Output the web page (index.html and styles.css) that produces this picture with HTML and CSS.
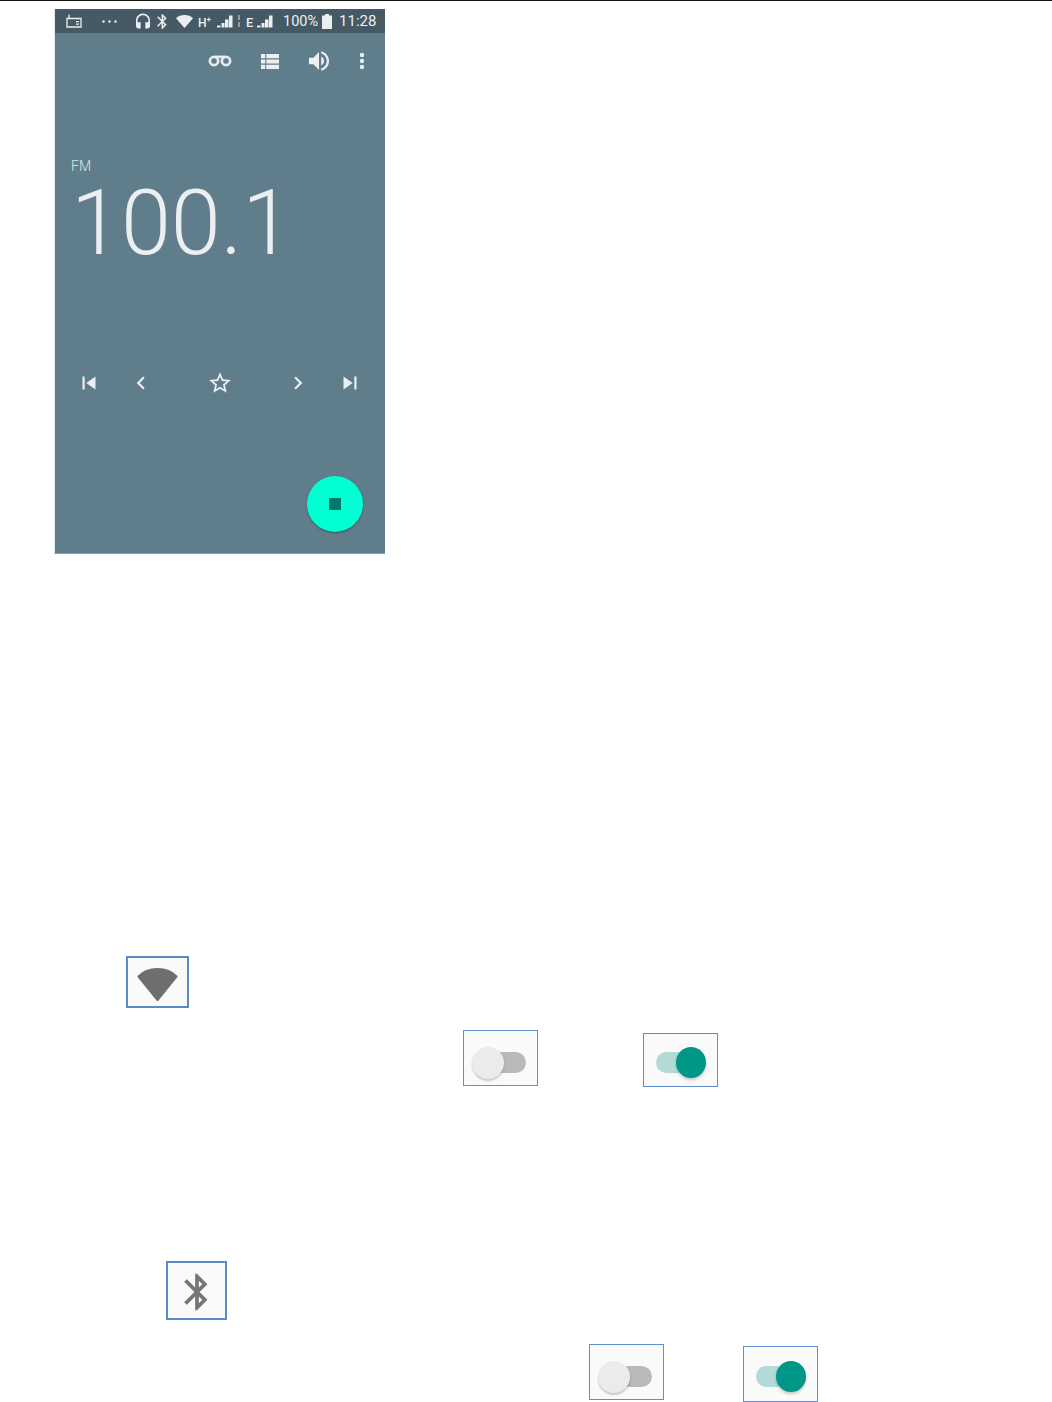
FILE: index.html
```html
<!DOCTYPE html>
<html lang="en">
<head>
    <meta charset="UTF-8">
    <meta name="viewport" content="width=device-width, initial-scale=1.0">
    <title>FM Radio</title>
    <link rel="stylesheet" href="styles.css">
</head>
<body>
    <div class="top-rule"></div>

    <div class="phone">
        <div class="status-bar">
            <svg class="st-radio" viewBox="0 0 16 14"><path d="M1 4.500h14v8.500H1z" fill="none" stroke="currentColor" stroke-width="1.300"/><path d="M3 4.500L3 .5" stroke="currentColor" stroke-width="1.300"/><path d="M10 7h3v1.200h-3zM10 9.600h3v1.200h-3z" fill="currentColor"/></svg>
            <svg class="st-dots" viewBox="0 0 15 3"><circle cx="1.500" cy="1.500" r="1.200" fill="currentColor"/><circle cx="7.500" cy="1.500" r="1.200" fill="currentColor"/><circle cx="13.500" cy="1.500" r="1.200" fill="currentColor"/></svg>
            <svg class="st-headset" viewBox="3 1 18 19"><path fill="currentColor" d="M12 1c-4.970 0-9 4.030-9 9v7c0 1.660 1.340 3 3 3h3v-8H5v-2c0-3.870 3.130-7 7-7s7 3.130 7 7v2h-4v8h3c1.660 0 3-1.340 3-3v-7c0-4.970-4.030-9-9-9z"/></svg>
            <svg class="st-bt" viewBox="5 2 13 20"><path fill="currentColor" d="M17.710 7.710L12 2h-1v7.590L6.410 5 5 6.410 10.590 12 5 17.590 6.410 19 11 14.410V22h1l5.710-5.710-4.300-4.290 4.300-4.290zM13 5.830l1.880 1.880L13 9.590V5.830zm1.880 10.460L13 18.170v-3.760l1.880 1.880z"/></svg>
            <svg class="st-wifi" viewBox="0 0 17 13"><path fill="currentColor" d="M0 3.200C2.200 1.200 5.200 0 8.500 0s6.300 1.200 8.500 3.200L8.500 13z"/></svg>
            <span class="st-hplus">H<sup>+</sup></span>
            <svg class="st-signal" viewBox="0 0 16 13"><path fill="currentColor" d="M0 10.500h3.500v2H0zM4.500 8h3v4.500h-3zM8 4.500h3.500v8H8zM12 .5h3.500v12H12z"/></svg>
            <svg class="st-arrows" viewBox="0 0 2 12"><path fill="currentColor" opacity=".45" d="M0 0h2v5H0zM0 7h2v5H0z"/></svg>
            <span class="st-e">E</span>
            <svg class="st-signal st-signal-two" viewBox="0 0 16 13"><path fill="currentColor" d="M0 10.500h3.500v2H0zM4.500 8h3v4.500h-3zM8 4.500h3.500v8H8zM12 .5h3.500v12H12z"/></svg>
            <span class="st-pct">100%</span>
            <svg class="st-battery" viewBox="0 0 10 15"><path fill="currentColor" d="M3 0h4v1.500h3V15H0V1.500h3z"/></svg>
            <span class="st-time">11:28</span>
        </div>

        <div class="toolbar">
            <svg class="tb-voicemail" viewBox="-1 5 26 13"><path fill="currentColor" stroke="currentColor" stroke-width=".8" d="M18.500 6C15.460 6 13 8.460 13 11.500c0 1.330.47 2.550 1.260 3.500H9.740c.79-.95 1.260-2.170 1.260-3.500C11 8.460 8.540 6 5.500 6S0 8.460 0 11.500 2.460 17 5.500 17h13c3.040 0 5.500-2.460 5.500-5.500S21.540 6 18.500 6zm-13 9C3.570 15 2 13.430 2 11.500S3.570 8 5.500 8 9 9.570 9 11.500 7.430 15 5.500 15zm13 0c-1.930 0-3.500-1.570-3.500-3.500S16.570 8 18.500 8 22 9.570 22 11.500 20.430 15 18.500 15z"/></svg>
            <svg class="tb-list" viewBox="4 5 17 14"><path fill="currentColor" d="M4 14h4v-4H4v4zm0 5h4v-4H4v4zM4 9h4V5H4v4zm5 5h12v-4H9v4zm0 5h12v-4H9v4zM9 5v4h12V5H9z"/></svg>
            <svg class="tb-volume" viewBox="3 3 18 18"><path fill="currentColor" d="M3 9v6h4l5 5V4L7 9H3zm13.500 3c0-1.770-1.020-3.290-2.500-4.030v8.050c1.480-.73 2.500-2.250 2.500-4.020zM14 3.230v2.060c2.890.86 5 3.540 5 6.710s-2.110 5.850-5 6.710v2.060c4.010-.91 7-4.490 7-8.770s-2.990-7.860-7-8.770z"/></svg>
            <svg class="tb-more" viewBox="0 0 6 18"><circle cx="3" cy="3" r="2.200" fill="currentColor"/><circle cx="3" cy="9" r="2.200" fill="currentColor"/><circle cx="3" cy="15" r="2.200" fill="currentColor"/></svg>
        </div>

        <div class="band">FM</div>
        <div class="freq">100.1</div>

        <div class="transport">
            <div class="transport-group">
                <svg class="tr-icon" viewBox="0 0 24 24"><path fill="currentColor" d="M6 6h2v12H6zm3.500 6l8.500 6V6z"/></svg>
                <svg class="tr-icon" viewBox="0 0 24 24"><path fill="currentColor" d="M15.410 7.410L14 6l-6 6 6 6 1.410-1.410L10.830 12z"/></svg>
            </div>
            <svg class="tr-icon" viewBox="0 0 24 24"><path fill="currentColor" d="M22 9.240l-7.190-.62L12 2 9.190 8.630 2 9.240l5.460 4.730L5.820 21 12 17.270 18.180 21l-1.630-7.030L22 9.240zM12 15.400l-3.760 2.270 1-4.280-3.320-2.880 4.380-.38L12 6.100l1.710 4.040 4.380.38-3.320 2.880 1 4.280L12 15.400z"/></svg>
            <div class="transport-group">
                <svg class="tr-icon" viewBox="0 0 24 24"><path fill="currentColor" d="M10 6L8.590 7.410 13.170 12l-4.580 4.590L10 18l6-6z"/></svg>
                <svg class="tr-icon" viewBox="0 0 24 24"><path fill="currentColor" d="M6 18l8.500-6L6 6v12zM16 6v12h2V6h-2z"/></svg>
            </div>
        </div>

        <div class="fab-row">
            <div class="fab"><div class="fab-stop"></div></div>
        </div>
    </div>

    <div class="icon-box wifi-box">
        <svg class="wifi-glyph" viewBox="0 0 41 33"><path d="M1.500 8.500C6 3.500 12.500 1 20.500 1s14.500 2.500 19 7.500L20.500 32z"/></svg>
    </div>

    <div class="toggle-row wifi-toggles">
        <div class="toggle-box">
            <div class="thumb thumb-off"></div>
            <div class="track track-off"></div>
        </div>
        <div class="toggle-box toggle-box-on wifi-on">
            <div class="track track-on"></div>
            <div class="thumb thumb-on"></div>
        </div>
    </div>

    <div class="icon-box bt-box">
        <svg class="bt-glyph" viewBox="0 0 24 24"><path d="M17.710 7.710L12 2h-1v7.590L6.410 5 5 6.410 10.590 12 5 17.590 6.410 19 11 14.410V22h1l5.710-5.710-4.300-4.290 4.300-4.290zM13 5.830l1.880 1.880L13 9.590V5.830zm1.880 10.460L13 18.170v-3.760l1.880 1.880z"/></svg>
    </div>

    <div class="toggle-row bt-toggles">
        <div class="toggle-box">
            <div class="thumb thumb-off"></div>
            <div class="track track-off"></div>
        </div>
        <div class="toggle-box toggle-box-on bt-on">
            <div class="track track-on"></div>
            <div class="thumb thumb-on"></div>
        </div>
    </div>
</body>
</html>
```

FILE: styles.css
```css
body {
    margin: 0;
    background-color: white;
    font-family: Roboto, "Liberation Sans", sans-serif;
    overflow: hidden;
}

.top-rule {
    height: 1px;
    background-color: #111;
}

/* radio screenshot */
.phone {
    width: 330px;
    height: 544px;
    margin: 8px 0 0 54px;
    border-left: 1px solid #e4eaf2;
    border-bottom: 1px solid #7f9cc2;
    background-color: #607d8b;
    color: #eceff1;
}

.status-bar {
    display: flex;
    align-items: center;
    height: 24px;
    padding-left: 11px;
    background-color: #455a64;
}

.status-bar svg {
    display: block;
    flex: none;
}

.st-radio { width: 16px; height: 14px; }
.st-dots { width: 15px; height: 3px; margin-left: 20px; }
.st-headset { width: 14px; height: 16px; margin-left: 19px; }
.st-bt { width: 10px; height: 15px; margin-left: 7px; }
.st-wifi { width: 17px; height: 13px; margin-left: 9px; }
.st-signal { width: 16px; height: 13px; margin-left: 4px; }
.st-signal-two { margin-left: 3px; }
.st-arrows { width: 2px; height: 12px; margin-left: 5px; }
.st-battery { width: 10px; height: 15px; margin-left: 4px; }

.st-hplus {
    width: 15px;
    margin: 3px 0 0 5px;
    font-size: 12px;
    font-weight: 500;
}

.st-hplus sup {
    font-size: 8px;
    line-height: 0;
}

.st-e {
    width: 8px;
    margin: 3px 0 0 6px;
    font-size: 13px;
    font-weight: 500;
}

.st-pct {
    margin-left: 10px;
    font-size: 14.5px;
}

.st-time {
    margin-left: 7px;
    font-size: 15px;
}

.toolbar {
    display: flex;
    justify-content: flex-end;
    align-items: center;
    gap: 30px;
    height: 56px;
    padding-right: 20px;
}

.toolbar svg { display: block; }

.tb-voicemail {
    width: 24px;
    height: 12px;
    margin: 0 -1px;
    transform: scaleY(-1);
}

.tb-list { width: 18px; height: 15px; }
.tb-volume { width: 20px; height: 20px; }
.tb-more { width: 6px; height: 18px; }

.band {
    margin: 69px 0 0 16px;
    font-size: 14px;
    font-weight: 300;
    line-height: 16px;
    color: #dfe5e8;
}

.freq {
    margin: 5px 0 0 16px;
    font-size: 90px;
    font-weight: 300;
    line-height: 90px;
}

.transport {
    display: flex;
    justify-content: space-between;
    align-items: center;
    height: 36px;
    margin-top: 95.5px;
    padding: 0 17px 0 16px;
}

.transport-group {
    display: flex;
    gap: 16px;
}

.tr-icon {
    display: block;
    width: 36px;
    height: 26px;
}

.fab-row {
    display: flex;
    justify-content: flex-end;
    margin-top: 75.5px;
    padding-right: 22px;
}

.fab {
    display: flex;
    justify-content: center;
    align-items: center;
    width: 56px;
    height: 56px;
    border-radius: 50%;
    background-color: #00ffd2;
    box-shadow: 0 1px 2px rgba(0, 0, 0, 0.35);
}

.fab-stop {
    width: 12px;
    height: 12px;
    background-color: #00796b;
}

/* cropped icons below the screenshot */
.icon-box {
    display: flex;
    justify-content: center;
    align-items: center;
    box-sizing: border-box;
    border: 2px solid #5b8ac6;
    background-color: #fafafa;
}

.wifi-box {
    width: 63px;
    height: 52px;
    margin: 402px 0 0 126px;
    padding-top: 4px;
}

.wifi-glyph {
    width: 41px;
    height: 33px;
    fill: #6e6e6e;
    stroke: #6e6e6e;
    stroke-width: 2;
    stroke-linejoin: round;
    filter: blur(0.6px);
}

.bt-box {
    width: 61px;
    height: 59px;
    margin: 174px 0 0 166px;
    padding-top: 3px;
}

.bt-glyph {
    width: 44px;
    height: 44px;
    fill: #757575;
    filter: blur(0.6px);
}

.toggle-row {
    display: flex;
    align-items: flex-start;
}

.wifi-toggles {
    gap: 105px;
    margin-top: 22px;
    padding-left: 463px;
}

.bt-toggles {
    gap: 79px;
    margin-top: 24px;
    padding-left: 589px;
}

.toggle-box {
    display: flex;
    align-items: center;
    box-sizing: border-box;
    width: 75px;
    height: 56px;
    padding: 9px 0 0 8px;
    border: 1px solid #5f8fd0;
    background-color: #fafafa;
}

.toggle-box-on {
    padding: 5px 0 0 12px;
}

.wifi-on { margin-top: 3px; height: 54px; }
.bt-on { margin-top: 2px; }

.thumb {
    position: relative;
    flex: none;
    width: 32px;
    height: 32px;
    border-radius: 50%;
}

.thumb-off {
    background-color: #ebebeb;
    box-shadow: 0 2px 2px rgba(0, 0, 0, 0.2);
}

.thumb-on {
    width: 30px;
    height: 31px;
    margin-left: -12px;
    background-color: #009688;
    box-shadow: 0 2px 3px rgba(0, 0, 0, 0.2);
}

.track {
    flex: none;
    height: 21px;
    border-radius: 11px;
}

.track-off {
    width: 49px;
    margin-left: -27px;
    background-color: #b9b9b9;
}

.track-on {
    width: 32px;
    background-color: #b2dad6;
}
```
